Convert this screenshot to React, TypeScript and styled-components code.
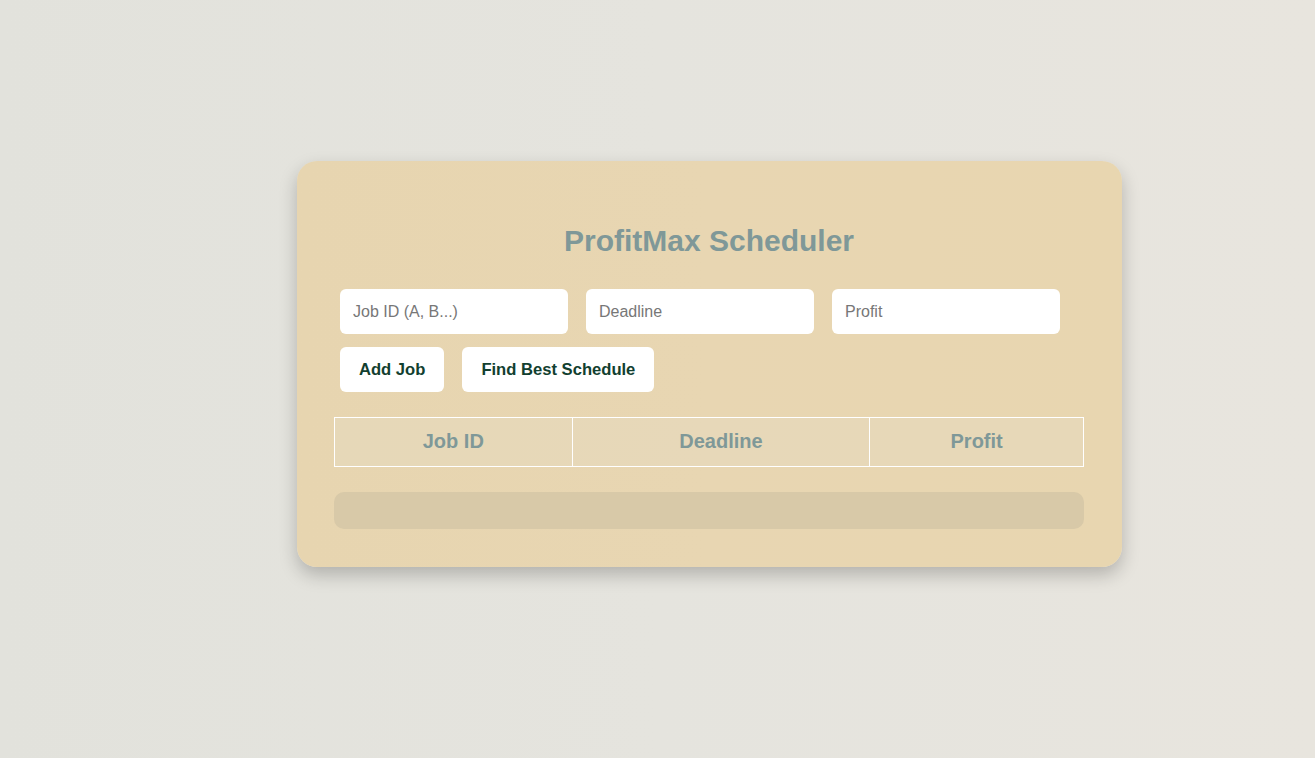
import React, { FC, useState } from 'react'
import styled, { createGlobalStyle } from 'styled-components'

const GlobalStyle = createGlobalStyle`
    html, body {
        margin: 0;
        padding: 0;
    }
    body {
        font-family: 'Liberation Sans', Arial, sans-serif;
        background: linear-gradient(90deg, #e2e2dc 0%, #e5e4de 50%, #e8e5de 100%);
        min-height: 758px;
    }
`

const Page = styled.div`
    display: flex;
    align-items: flex-start;
    padding: 161px 0 0 297px;
    min-height: 758px;
    box-sizing: border-box;
`

const Card = styled.div`
    width: 825px;
    box-sizing: border-box;
    padding: 37px 38px 38px 37px;
    border-radius: 20px;
    background: linear-gradient(90deg, #e7d5b0 0%, #e8d6b2 50%, #e8d6b0 100%);
    box-shadow: 0 8px 18px rgba(0, 0, 0, 0.22);
`

const Title = styled.h2`
    margin: 27px 0 32px;
    text-align: center;
    font-size: 30px;
    line-height: 32px;
    font-weight: bold;
    color: #7f9898;
`

const Row = styled.div<{ $gap: number }>`
    display: flex;
    gap: 18px;
    padding-left: 6px;
    margin-bottom: ${p => p.$gap}px;
`

const Input = styled.input`
    width: 228px;
    height: 45px;
    box-sizing: border-box;
    padding: 0 13px;
    border: none;
    border-radius: 6px;
    background: #fff;
    font-family: 'Liberation Sans', Arial, sans-serif;
    font-size: 16px;
    color: #333;
    outline: none;

    &::placeholder {
        color: #777;
    }
`

const Button = styled.button`
    height: 45px;
    padding: 0 19px;
    border: none;
    border-radius: 6px;
    background: #fff;
    font-family: 'Liberation Sans', Arial, sans-serif;
    font-size: 16.6px;
    font-weight: bold;
    color: #123f30;
    cursor: pointer;
`

const Table = styled.table`
    width: 750px;
    border-collapse: collapse;
    background: rgba(230, 216, 186, 0.8);
`

const HeadCell = styled.th<{ $width: number }>`
    width: ${p => p.$width}px;
    height: 49px;
    box-sizing: border-box;
    padding: 0 0 1px;
    border: 1px solid #fff;
    font-size: 20px;
    font-weight: bold;
    color: #7f9898;
    text-align: center;
`

const Result = styled.div`
    margin-top: 25px;
    height: 37px;
    border-radius: 10px;
    background: #d8c9a8;
`

interface Job {
    id: string
    deadline: number
    profit: number
}

const App: FC = () => {
    const [jobs, setJobs] = useState<Job[]>([])
    const [id, setId] = useState('')
    const [deadline, setDeadline] = useState('')
    const [profit, setProfit] = useState('')

    const addJob = () => {
        if (!id || !deadline || !profit) return
        setJobs([...jobs, { id, deadline: Number(deadline), profit: Number(profit) }])
        setId('')
        setDeadline('')
        setProfit('')
    }

    return (
        <>
            <GlobalStyle />
            <Page>
                <Card>
                    <Title>ProfitMax Scheduler</Title>
                    <Row $gap={13}>
                        <Input
                            placeholder="Job ID (A, B...)"
                            value={id}
                            onChange={e => setId(e.target.value)}
                        />
                        <Input
                            placeholder="Deadline"
                            value={deadline}
                            onChange={e => setDeadline(e.target.value)}
                        />
                        <Input
                            placeholder="Profit"
                            value={profit}
                            onChange={e => setProfit(e.target.value)}
                        />
                    </Row>
                    <Row $gap={25}>
                        <Button onClick={addJob}>Add Job</Button>
                        <Button>Find Best Schedule</Button>
                    </Row>
                    <Table>
                        <thead>
                            <tr>
                                <HeadCell $width={238}>Job ID</HeadCell>
                                <HeadCell $width={298}>Deadline</HeadCell>
                                <HeadCell $width={214}>Profit</HeadCell>
                            </tr>
                        </thead>
                        <tbody>
                            {jobs.map((job, i) => (
                                <tr key={i}>
                                    <td>{job.id}</td>
                                    <td>{job.deadline}</td>
                                    <td>{job.profit}</td>
                                </tr>
                            ))}
                        </tbody>
                    </Table>
                    <Result />
                </Card>
            </Page>
        </>
    )
}

export default App
